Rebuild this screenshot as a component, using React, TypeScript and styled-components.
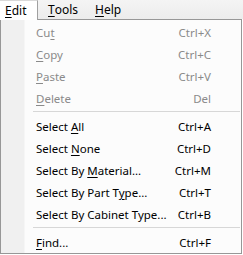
import styled, { createGlobalStyle } from 'styled-components';

const GlobalStyle = createGlobalStyle`
    html, body {
        margin: 0;
        padding: 0;
        background: #ffffff;
    }
    body {
        font-family: "Noto Sans", "Open Sans", sans-serif;
        font-size: 11.5px;
        color: #000000;
    }
`

const Screen = styled.div`
    width: 243px;
    height: 255px;
    overflow: hidden;
    background: #ffffff;
`

const MenuBar = styled.div`
    display: flex;
    flex-direction: row;
    align-items: stretch;
    height: 19px;
    background: linear-gradient(#f4f4f4, #ececec);
    position: relative;
    z-index: 2;
`

interface ITab {
    Active?: boolean;
    Width: string;
}

const MenuTab = styled.div<ITab>`
    display: flex;
    align-items: center;
    box-sizing: border-box;
    width: ${(props) => props.Width};
    padding-left: ${(props) => props.Active ? "5px" : "10px"};
    height: ${(props) => props.Active ? "20px" : "19px"};
    background: ${(props) => props.Active ? "#ffffff" : "transparent"};
    border-right: ${(props) => props.Active ? "1px solid #a0a0a0" : "none"};
    border-top: ${(props) => props.Active ? "1px solid #d9d9d9" : "none"};
    font-size: 12px;
    line-height: 17px;
`

const Key = styled.span`
    text-decoration: underline;
    text-underline-offset: 2px;
    text-decoration-thickness: 1px;
`

const Popup = styled.div`
    display: flex;
    flex-direction: column;
    box-sizing: border-box;
    width: 242px;
    height: 235px;
    border: 1px solid #979797;
    padding: 1px 1px 0 1px;
    background: linear-gradient(to right, #f0f0f0 0px, #f0f0f0 23px, #fcfcfc 24px, #fcfcfc 100%);
`

interface IItem {
    Disabled?: boolean;
}

const Item = styled.div<IItem>`
    display: flex;
    flex-direction: row;
    align-items: center;
    height: 22px;
    padding-left: 34px;
    padding-right: 29px;
    color: ${(props) => props.Disabled ? "#8a8a8a" : "#000000"};
`

const Label = styled.span`
    flex: 1;
    white-space: nowrap;
`

const Shortcut = styled.span`
    white-space: nowrap;
    text-align: right;
`

const Separator = styled.div`
    height: 1px;
    margin: 2px 0 3px 31px;
    background: #d7d7d7;
`

export default function App(){
    return(
        <>
            <GlobalStyle/>
            <Screen>
                <MenuBar>
                    <MenuTab Active Width='38px'><Key>E</Key>dit</MenuTab>
                    <MenuTab Width='47px'><Key>T</Key>ools</MenuTab>
                    <MenuTab Width='40px'><Key>H</Key>elp</MenuTab>
                </MenuBar>
                <Popup>
                    <Item Disabled><Label>Cu<Key>t</Key></Label><Shortcut>Ctrl+X</Shortcut></Item>
                    <Item Disabled><Label><Key>C</Key>opy</Label><Shortcut>Ctrl+C</Shortcut></Item>
                    <Item Disabled><Label><Key>P</Key>aste</Label><Shortcut>Ctrl+V</Shortcut></Item>
                    <Item Disabled><Label><Key>D</Key>elete</Label><Shortcut>Del</Shortcut></Item>
                    <Separator/>
                    <Item><Label>Select <Key>A</Key>ll</Label><Shortcut>Ctrl+A</Shortcut></Item>
                    <Item><Label>Select <Key>N</Key>one</Label><Shortcut>Ctrl+D</Shortcut></Item>
                    <Item><Label>Select By <Key>M</Key>aterial...</Label><Shortcut>Ctrl+M</Shortcut></Item>
                    <Item><Label>Select By Part T<Key>y</Key>pe...</Label><Shortcut>Ctrl+T</Shortcut></Item>
                    <Item><Label>Select By Cabinet Type...</Label><Shortcut>Ctrl+B</Shortcut></Item>
                    <Separator/>
                    <Item><Label><Key>F</Key>ind...</Label><Shortcut>Ctrl+F</Shortcut></Item>
                </Popup>
            </Screen>
        </>
    );
}
